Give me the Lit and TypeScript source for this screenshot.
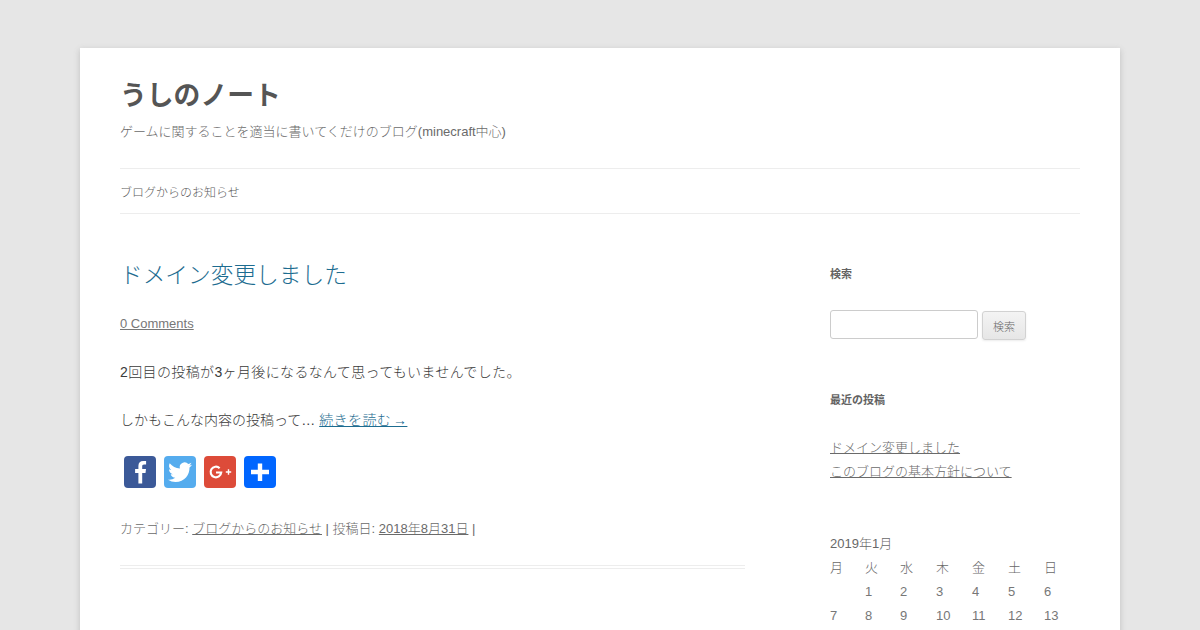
import { LitElement, html, css } from "lit";
import { customElement } from "lit/decorators.js";

const week1 = ["", "1", "2", "3", "4", "5", "6"];
const week2 = ["7", "8", "9", "10", "11", "12", "13"];
const head = ["月", "火", "水", "木", "金", "土", "日"];

@customElement("app-root")
export class AppRoot extends LitElement {
  static styles = css`
    :host {
      display: block;
      height: 630px;
      overflow: hidden;
      background: #e6e6e6;
      font-family: "Liberation Sans", "Noto Sans CJK JP", sans-serif;
      font-weight: 300;
      color: #3a3a3a;
      font-size: 14px;
    }
    a { color: #6a6a6a; text-decoration: underline; }
    .page {
      margin: 48px 80px 0;
      padding: 0 40px;
      background: #fff;
      box-shadow: 0 2px 6px rgba(100, 100, 100, 0.3);
      height: 700px;
    }
    header { padding-top: 25px; }
    h1 { margin: 0; font-size: 26.8px; line-height: 47px; font-weight: bold; color: #555; }
    .tag { margin: 0; font-size: 13px; line-height: 24px; color: #6a6a6a; height: 24px; }
    nav {
      margin-top: 24px;
      border-top: 1px solid #ededed;
      border-bottom: 1px solid #ededed;
      height: 44px;
      display: flex;
      align-items: center;
      font-size: 12px;
      color: #5c5c5c;
    }
    .cols { display: flex; justify-content: space-between; padding-top: 48px; }
    main { width: 625px; }
    aside { width: 250px; padding-top: 4px; }
    h2.title { margin: 0; font-size: 22.7px; line-height: 26px; font-weight: 300; color: #1d6c90; }
    .comments { font-size: 13px; line-height: 24px; margin-top: 24px; }
    .comments a { color: #777; }
    p { margin: 0; line-height: 24px; }
    .c1 { margin-top: 24px; letter-spacing: 0.37px; }
    .c2 { margin-top: 24px; }
    .more { color: #1d6c90; letter-spacing: 0.4px; word-spacing: -2.5px; }
    .share { display: flex; gap: 8px; margin: 24px 0 0 4px; }
    .share svg { display: block; width: 32px; height: 32px; }
    .meta { margin-top: 29px; font-size: 13px; line-height: 24px; color: #6a6a6a; }
    .rule { margin-top: 24px; height: 2px; border-top: 1px solid #ededed; border-bottom: 1px solid #ededed; }
    h3 { margin: 0; font-size: 11px; line-height: 16px; font-weight: bold; color: #636363; }
    .search { display: flex; gap: 4px; align-items: flex-start; margin-top: 28px; }
    .search input {
      box-sizing: border-box; width: 148px; height: 29px; margin: 0; padding: 0;
      border: 1px solid #ccc; border-radius: 3px; background: #fff;
    }
    .search button {
      box-sizing: border-box; width: 44px; height: 29px; margin: 1px 0 0; padding: 0;
      font: 300 11px "Liberation Sans", "Noto Sans CJK JP", sans-serif;
      color: #6a6a6a;
      border: 1px solid #d2d2d2; border-radius: 3px;
      background: linear-gradient(#f4f4f4, #e6e6e6);
      box-shadow: 0 1px 2px rgba(64, 64, 64, 0.1);
    }
    .recent-h { margin-top: 52px; }
    .recent { margin-top: 28px; font-size: 13px; line-height: 24px; }
    .recent a { display: block; width: max-content; }
    .cal { margin-top: 48px; font-size: 13px; line-height: 24px; color: #686868; }
    .row { display: grid; grid-template-columns: 35px 35px 36px 36px 36px 36px 36px; }
    .nums { color: #777; }
  `;

  render() {
    const row = (r: string[], cls = "") =>
      html`<div class="row ${cls}">${r.map((d) => html`<span>${d}</span>`)}</div>`;
    return html`
      <div class="page">
        <header>
          <h1>うしのノート</h1>
          <p class="tag">ゲームに関することを適当に書いてくだけのブログ(minecraft中心)</p>
          <nav>ブログからのお知らせ</nav>
        </header>
        <div class="cols">
          <main>
            <h2 class="title">ドメイン変更しました</h2>
            <div class="comments"><a href="#">0 Comments</a></div>
            <p class="c1">2回目の投稿が3ヶ月後になるなんて思ってもいませんでした。</p>
            <p class="c2">しかもこんな内容の投稿って… <a class="more" href="#">続きを読む →</a></p>
            <div class="share">
              <svg viewBox="0 0 32 32"><rect width="32" height="32" rx="4" fill="#3b5998"/><path fill="#fff" d="M18.200 27.400V16.900h3.300l.5-4h-3.800v-2.400c0-1.100.4-1.900 1.900-1.900h2V5.100c-.5-.1-1.600-.2-2.900-.2-2.900 0-4.800 1.800-4.800 5v3h-3.300v4h3.300v10.500z"/></svg>
              <svg viewBox="0 0 32 32"><rect width="32" height="32" rx="4" fill="#55acee"/><path fill="#fff" d="M28 8.700c-.9.4-1.800.7-2.800.8 1-.6 1.800-1.600 2.200-2.700-1 .6-2 1-3.100 1.200a4.900 4.900 0 0 0-8.400 4.500C11.800 12.300 8.200 10.300 5.700 7.300c-1.300 2.300-.7 5.100 1.500 6.600-.8 0-1.500-.2-2.200-.6 0 2.400 1.700 4.400 3.900 4.900-.7.200-1.500.2-2.200.1.600 2 2.400 3.400 4.600 3.400A9.900 9.900 0 0 1 4 23.700 14 14 0 0 0 11.500 26c9.100 0 14.300-7.700 14-14.600 1-.7 1.800-1.600 2.500-2.700z"/></svg>
              <svg viewBox="0 0 32 32"><rect width="32" height="32" rx="4" fill="#dd4b39"/><path fill="none" stroke="#fff" stroke-width="2.200" d="M15.600 12.200a5.300 5.300 0 1 0 1.600 4.300H12"/><path fill="#fff" d="M23.800 13.300h1.400v2h2v1.400h-2v2h-1.400v-2h-2v-1.400h2z"/></svg>
              <svg viewBox="0 0 32 32"><rect width="32" height="32" rx="4" fill="#0166ff"/><path fill="#fff" d="M13.800 7.500h4.400v6.300h6.800v4.400h-6.800v6.800h-4.400v-6.800H7v-4.400h6.800z"/></svg>
            </div>
            <div class="meta">カテゴリー: <a href="#">ブログからのお知らせ</a> | 投稿日: <a href="#">2018年8月31日</a> |</div>
            <div class="rule"></div>
          </main>
          <aside>
            <h3>検索</h3>
            <div class="search"><input type="text" /><button>検索</button></div>
            <h3 class="recent-h">最近の投稿</h3>
            <div class="recent">
              <a href="#">ドメイン変更しました</a>
              <a href="#">このブログの基本方針について</a>
            </div>
            <div class="cal">
              <div>2019年1月</div>
              ${row(head)}${row(week1, "nums")}${row(week2, "nums")}
            </div>
          </aside>
        </div>
      </div>
    `;
  }
}
